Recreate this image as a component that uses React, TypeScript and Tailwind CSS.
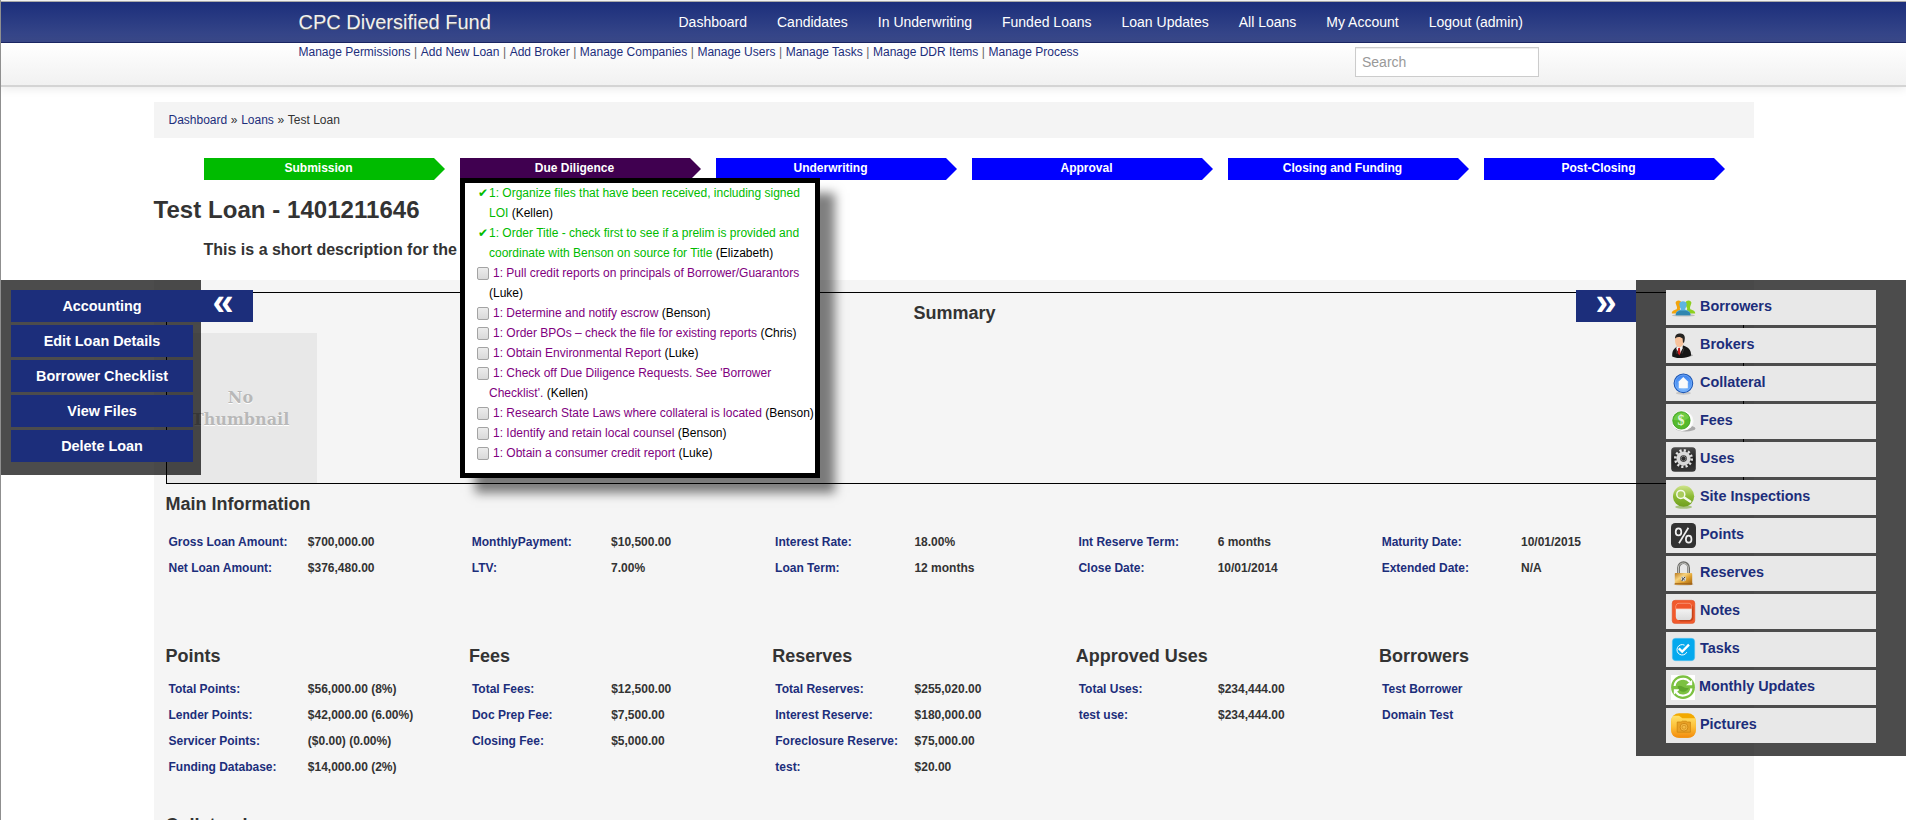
import React from "react";

const navItems = ["Dashboard", "Candidates", "In Underwriting", "Funded Loans", "Loan Updates", "All Loans", "My Account", "Logout (admin)"];
const adminLinks = ["Manage Permissions", "Add New Loan", "Add Broker", "Manage Companies", "Manage Users", "Manage Tasks", "Manage DDR Items", "Manage Process"];

const steps = [
  { label: "Submission", color: "bg-[#00bb00]" },
  { label: "Due Diligence", color: "bg-[#400050]" },
  { label: "Underwriting", color: "bg-[#0000ff]" },
  { label: "Approval", color: "bg-[#0000ff]" },
  { label: "Closing and Funding", color: "bg-[#0000ff]" },
  { label: "Post-Closing", color: "bg-[#0000ff]" },
];

type Task = { done?: boolean; lines: string[]; who: string };
const tasks: Task[] = [
  { done: true, lines: ["1: Organize files that have been received, including signed", "LOI "], who: "(Kellen)" },
  { done: true, lines: ["1: Order Title - check first to see if a prelim is provided and", "coordinate with Benson on source for Title "], who: "(Elizabeth)" },
  { lines: ["1: Pull credit reports on principals of Borrower/Guarantors", ""], who: "(Luke)" },
  { lines: ["1: Determine and notify escrow "], who: "(Benson)" },
  { lines: ["1: Order BPOs – check the file for existing reports "], who: "(Chris)" },
  { lines: ["1: Obtain Environmental Report "], who: "(Luke)" },
  { lines: ["1: Check off Due Diligence Requests. See 'Borrower", "Checklist'. "], who: "(Kellen)" },
  { lines: ["1: Research State Laws where collateral is located "], who: "(Benson)" },
  { lines: ["1: Identify and retain local counsel "], who: "(Benson)" },
  { lines: ["1: Obtain a consumer credit report "], who: "(Luke)" },
];

type Row = [string, string];
const mainInfo: Row[][] = [
  [["Gross Loan Amount:", "$700,000.00"], ["Net Loan Amount:", "$376,480.00"]],
  [["MonthlyPayment:", "$10,500.00"], ["LTV:", "7.00%"]],
  [["Interest Rate:", "18.00%"], ["Loan Term:", "12 months"]],
  [["Int Reserve Term:", "6 months"], ["Close Date:", "10/01/2014"]],
  [["Maturity Date:", "10/01/2015"], ["Extended Date:", "N/A"]],
];

const sections: { title: string; rows: Row[] }[] = [
  { title: "Points", rows: [["Total Points:", "$56,000.00 (8%)"], ["Lender Points:", "$42,000.00 (6.00%)"], ["Servicer Points:", "($0.00) (0.00%)"], ["Funding Database:", "$14,000.00 (2%)"]] },
  { title: "Fees", rows: [["Total Fees:", "$12,500.00"], ["Doc Prep Fee:", "$7,500.00"], ["Closing Fee:", "$5,000.00"]] },
  { title: "Reserves", rows: [["Total Reserves:", "$255,020.00"], ["Interest Reserve:", "$180,000.00"], ["Foreclosure Reserve:", "$75,000.00"], ["test:", "$20.00"]] },
  { title: "Approved Uses", rows: [["Total Uses:", "$234,444.00"], ["test use:", "$234,444.00"]] },
  { title: "Borrowers", rows: [["Test Borrower", ""], ["Domain Test", ""]] },
];

const actions = ["Accounting", "Edit Loan Details", "Borrower Checklist", "View Files", "Delete Loan"];

function Icon({ children }: { children: React.ReactNode }) {
  return (
    <svg width="25" height="25" viewBox="0 0 25 25" className="block shrink-0">
      {children}
    </svg>
  );
}

const BorrowersIcon = (
  <Icon>
    <ellipse cx="12.5" cy="20.4" rx="11.5" ry="1.2" fill="#bdbdbd" />
    <path d="M4.6 8C4.4 5 9.8 4.4 10.4 7.6L10 11 8.8 13.6 10 18.4H.8C.8 15.8 3 15.2 5.8 14.2L6 12.2Z" fill="#f2a40c" />
    <path d="M20.4 8C20.6 5 15.2 4.4 14.6 7.6L15 11 16.2 13.6 15 18.4H24.2C24.2 15.8 22 15.2 19.2 14.2L19 12.2Z" fill="#8dd01f" />
    <path d="M8.2 9.4C8.2 5.2 15.8 5.2 15.8 9.4L14.8 12.8 13.8 14.6C16.8 15.6 19.4 16 19.5 20.2H4.7C4.8 16 7.2 15.6 10.2 14.6L9.2 12.8Z" fill="#5db4e0" />
    <path d="M4.7 20.2C4.8 17.5 6 16.6 9 15.4H15C18.3 16.6 19.4 17.6 19.5 20.2Z" fill="#2f86b0" />
  </Icon>
);

const BrokersIcon = (
  <Icon>
    <ellipse cx="14" cy="22.3" rx="8" ry="1.6" fill="#a8a8a8" />
    <path d="M1.2 23.4C1 17 3.2 15.6 6.4 13.2L12.4 12.4C17.4 14.4 20.4 16.4 20 22.6 15 25.8 5 25.6 1.2 23.4Z" fill="#161616" />
    <path d="M5.6 13.6L11.8 11.8 11.6 15.4 8.8 21 5.2 16Z" fill="#f3f3f3" />
    <path d="M7.2 15L9 14.8 9.4 20.4 8.4 22.4 6.6 20Z" fill="#c81e1e" />
    <path d="M4.2 5.2C4.4 2.6 11.4 2 12.4 5.4 13.4 9 12.4 13.6 8.2 14.2 4.6 13.6 3.6 9 4.2 5.2Z" fill="#f7c39d" />
    <path d="M4 5.4C4.2 1.2 7 .4 9.6.6 13.6.8 14.8 4 13.2 9.2L12 10 11.6 5.6C9.6 3.4 6.6 3.4 4 5.4Z" fill="#262422" />
    <path d="M13 15.4L11 20.6M5 15.6L6 21" stroke="#4a4a4a" strokeWidth=".7" />
  </Icon>
);

const CollateralIcon = (
  <Icon>
    <defs>
      <radialGradient id="homeBlue" cx=".5" cy=".7" r=".7">
        <stop offset="0" stopColor="#8cc4ff" />
        <stop offset=".7" stopColor="#4a90f4" />
        <stop offset="1" stopColor="#3a78e0" />
      </radialGradient>
    </defs>
    <ellipse cx="12.4" cy="22.2" rx="7.5" ry="1.6" fill="#c6c6c6" />
    <circle cx="12.4" cy="12.3" r="9.3" fill="url(#homeBlue)" stroke="#1c56b4" strokeWidth="1.1" />
    <circle cx="12.4" cy="12.3" r="8.3" fill="none" stroke="#8ec0ff" strokeWidth=".5" />
    <path d="M12.3 5.9L17.6 11.2H16.8V17.2H7.8V11.2H7Z" fill="#fafafa" />
  </Icon>
);

const FeesIcon = (
  <Icon>
    <ellipse cx="14.5" cy="19.4" rx="10" ry="3" fill="#a9a9a9" />
    <circle cx="13.4" cy="12" r="9.2" fill="#f7f7f7" />
    <circle cx="11" cy="11.8" r="10.2" fill="#ffffff" />
    <circle cx="10.4" cy="11.4" r="8.7" fill="#55b92c" stroke="#349c16" strokeWidth=".8" />
    <path d="M2.6 11C3.4 3 15 1 18 8.4 14 12.6 8 11.4 2.6 11Z" fill="#74cf4b" opacity=".8" />
    <text x="10" y="16.4" textAnchor="middle" fontSize="14" fontWeight="bold" fontFamily="Liberation Serif, serif" fill="#e2f7d4">$</text>
  </Icon>
);

const UsesIcon = (
  <Icon>
    <defs>
      <linearGradient id="usesBg" x1="0" y1="0" x2="0" y2="1">
        <stop offset="0" stopColor="#4c4c4c" />
        <stop offset=".5" stopColor="#1f1f1f" />
        <stop offset="1" stopColor="#3a3a3a" />
      </linearGradient>
    </defs>
    <rect x=".2" y=".2" width="24.6" height="24.6" rx="3.6" fill="url(#usesBg)" />
    <circle cx="12.5" cy="11.6" r="8.2" fill="none" stroke="#e2e2e2" strokeWidth="2.6" strokeDasharray="2.147 2.147" />
    <circle cx="12.5" cy="11.6" r="5.2" fill="none" stroke="#d9d9d9" strokeWidth="3.8" />
    <circle cx="12.5" cy="11.6" r="2.4" fill="#2c2c2c" stroke="#8b8b8b" strokeWidth=".8" />
  </Icon>
);

const InspectionIcon = (
  <Icon>
    <defs>
      <linearGradient id="inspectBg" x1="0" y1="0" x2="0" y2="1">
        <stop offset="0" stopColor="#cfe48b" />
        <stop offset=".5" stopColor="#8dbb35" />
        <stop offset="1" stopColor="#6f9e1d" />
      </linearGradient>
    </defs>
    <ellipse cx="12.6" cy="22" rx="8.4" ry="1.8" fill="#a9c381" />
    <circle cx="12.6" cy="11.2" r="10.6" fill="url(#inspectBg)" />
    <path d="M12.8 12.2L19.2 16.6" stroke="#f4faea" strokeWidth="2.4" strokeLinecap="round" />
    <circle cx="9.8" cy="9.4" r="4" fill="#a9cc5c" stroke="#f4faea" strokeWidth="1.5" />
  </Icon>
);

const PointsIcon = (
  <Icon>
    <rect width="25" height="25" rx="4.2" fill="#323232" />
    <ellipse cx="7.5" cy="8.9" rx="2.8" ry="3.5" fill="none" stroke="#f0f0f0" strokeWidth="1.7" />
    <ellipse cx="17.7" cy="16.2" rx="2.8" ry="3.5" fill="none" stroke="#f0f0f0" strokeWidth="1.7" />
    <path d="M17.4 4.8L8 20.3" stroke="#f0f0f0" strokeWidth="1.7" />
  </Icon>
);

const ReservesIcon = (
  <Icon>
    <defs>
      <linearGradient id="lockBody" x1="0" y1="0" x2="1" y2="1">
        <stop offset="0" stopColor="#b9781c" />
        <stop offset=".35" stopColor="#f6d27e" />
        <stop offset=".6" stopColor="#dfa02e" />
        <stop offset="1" stopColor="#9f5f10" />
      </linearGradient>
    </defs>
    <ellipse cx="12.6" cy="23.2" rx="10" ry="1.4" fill="#c9c0b4" />
    <path d="M7.5 13V7C7.5-.2 17.6-.2 17.6 7V13" fill="none" stroke="#6a6a66" strokeWidth="2.8" />
    <path d="M7.4 13V7C7.4.4 17.3.4 17.3 7V13" fill="none" stroke="#c9c9c4" strokeWidth="1" />
    <rect x="3.8" y="12" width="17.4" height="11.8" rx=".8" fill="url(#lockBody)" />
    <path d="M3.8 22.8h17.4" stroke="#a2641a" strokeWidth="1.2" />
    <circle cx="12.5" cy="17.8" r="2.6" fill="#d9d6cc" />
    <path d="M10.8 16.6l1.6 1.2 1.6-1.8M12 18l-1.2 2M12.6 18.2l1 .8" stroke="#3b3b3b" strokeWidth="1" fill="none" />
  </Icon>
);

const NotesIcon = (
  <Icon>
    <defs>
      <linearGradient id="notePad" x1="0" y1="0" x2="0" y2="1">
        <stop offset="0" stopColor="#ffffff" />
        <stop offset="1" stopColor="#dcdcdc" />
      </linearGradient>
    </defs>
    <rect x="1.2" y="1.3" width="22.6" height="23.3" rx="3" fill="#f15a2c" stroke="#d9491f" strokeWidth=".5" />
    <path d="M7 20.6L9.4 22.4H18.6C21 22.4 22.4 21 22.4 18.6V8L20 5Z" fill="#b23a14" opacity=".7" />
    <rect x="4.8" y="4.2" width="16" height="16.8" rx="3.6" fill="url(#notePad)" />
    <path d="M4.8 9.8V7.8C4.8 5.4 6.2 4.2 8.4 4.2H17.2C19.4 4.2 20.8 5.4 20.8 7.8V9.8Z" fill="#f0562b" stroke="#ff9a78" strokeWidth=".5" />
  </Icon>
);

const TasksIcon = (
  <Icon>
    <rect x="1.3" y="1.3" width="22.4" height="22.4" rx="3.4" fill="#05a9ee" stroke="#5cc4f0" strokeWidth=".5" />
    <path d="M15.8 15.2A5.2 5.2 0 1 1 13.6 8.2" fill="none" stroke="#fff" strokeWidth="1" />
    <path d="M7.8 11.4L11.2 14.6 18 7.6" fill="none" stroke="#fff" strokeWidth="2.3" />
  </Icon>
);

const UpdatesIcon = (
  <svg width="24" height="25" viewBox="0 0 24 25" className="block shrink-0">
    <rect width="24" height="25" fill="#fff" />
    <circle cx="12" cy="12.2" r="11.9" fill="#7cc141" />
    <path d="M3.6 11C4.4 3.4 14.6 1.4 19 7.2" fill="none" stroke="#fff" strokeWidth="2.1" />
    <path d="M21.2 4.8V10.2H15Z" fill="#fff" />
    <path d="M20.4 13.4C19.6 21 9.4 23 5 17.2" fill="none" stroke="#fff" strokeWidth="2.1" />
    <path d="M2.8 19.8V14.2H9Z" fill="#fff" />
    <path d="M6.4 11.4C10 9 14 15 18 12.4 16.4 17.6 8.4 18.8 6.4 11.4Z" fill="#5fa62d" />
  </svg>
);

const PicturesIcon = (
  <Icon>
    <defs>
      <linearGradient id="picBg" x1="0" y1="0" x2="0" y2="1">
        <stop offset="0" stopColor="#ffe169" />
        <stop offset=".5" stopColor="#fdbf37" />
        <stop offset="1" stopColor="#f28a0c" />
      </linearGradient>
    </defs>
    <rect x=".2" y=".2" width="24.6" height="24.6" rx="8" fill="#f2a900" />
    <path d="M.2 7.6C.2 4.4 1.6 2.8 3.6 2.8H8L11.4 5.2H24.2C24.8 6.2 24.8 7.4 24.8 8.2V16.8C24.8 22 22 24.8 16.8 24.8H8.2C3 24.8.2 22 .2 16.8Z" fill="url(#picBg)" />
    <path d="M6.2 9h4l1-.8h4l1 .8h3.2v10.2H6.2z" fill="#e9a126" stroke="#c9820f" strokeWidth=".7" />
    <circle cx="13" cy="14.2" r="3.9" fill="#f5bb46" stroke="#c67d0e" strokeWidth=".8" />
    <circle cx="13" cy="14.2" r="2" fill="none" stroke="#d08c1a" strokeWidth=".8" />
  </Icon>
);

const shortcuts = [
  { label: "Borrowers", icon: BorrowersIcon },
  { label: "Brokers", icon: BrokersIcon },
  { label: "Collateral", icon: CollateralIcon },
  { label: "Fees", icon: FeesIcon },
  { label: "Uses", icon: UsesIcon },
  { label: "Site Inspections", icon: InspectionIcon },
  { label: "Points", icon: PointsIcon },
  { label: "Reserves", icon: ReservesIcon },
  { label: "Notes", icon: NotesIcon },
  { label: "Tasks", icon: TasksIcon },
  { label: "Monthly Updates", icon: UpdatesIcon },
  { label: "Pictures", icon: PicturesIcon },
];

function DataRow({ row }: { row: Row }) {
  return (
    <div className="flex h-[26px] items-center text-xs font-bold whitespace-nowrap">
      <span className="w-[139.3px] text-[#1c2e7b]">{row[0]}</span>
      <span>{row[1]}</span>
    </div>
  );
}

function TaskPopup() {
  return (
    <div className="absolute top-5 left-0 z-20 h-[300px] w-[360px] border-[5px] border-black bg-white text-xs leading-5 font-normal whitespace-nowrap shadow-[15px_15px_10px_rgba(0,0,0,0.5)]">
      {tasks.map((t) => (
        <div key={t.lines[0]} className={t.done ? "pl-6 text-[#00bb00]" : "pl-6 text-[#800080]"}>
          {t.lines.map((line, i) => (
            <div key={i} className="flex h-5 whitespace-pre">
              {i === 0 && t.done && <span className="-ml-[11px] w-[11px] font-['DejaVu_Sans']">✔</span>}
              {i === 0 && !t.done && (
                <span className="mt-1 mr-1 -ml-3 h-[13px] w-3 rounded-[2px] border border-[#a3a3a3] bg-linear-to-b from-[#ececec] to-[#d9d9d9]" />
              )}
              <span>{line}</span>
              {i === t.lines.length - 1 && <span className="text-black">{t.who}</span>}
            </div>
          ))}
        </div>
      ))}
    </div>
  );
}

export default function App() {
  return (
    <div className="relative h-[820px] w-[1906px] overflow-hidden bg-white font-['Liberation_Sans',Arial,sans-serif] text-xs text-[#333]">
      <header className="relative z-10">
        <div className="h-px bg-[#f2f2f2]" />
        <div className="h-px bg-[#a9a9a9]" />
        <div className="flex h-[41px] items-center border-b border-[#1c2766] bg-linear-to-b from-[#1c2e7b] to-[#3b4a8b] pl-[298.5px]">
          <span className="w-[365px] text-[20px] leading-5 text-[#f0f0f0] [text-shadow:0_1px_0_#666]">CPC Diversified Fund</span>
          <nav className="flex text-sm leading-5 text-white">
            {navItems.map((n) => (
              <a key={n} className="px-[15px]">{n}</a>
            ))}
          </nav>
        </div>
        <div className="flex h-11 items-start border-b-2 border-[#d4d4d4] bg-linear-to-b from-white to-[#f1f1f1] pl-[298.5px] shadow-[0_1px_10px_rgba(0,0,0,0.1)]">
          <div className="w-[1056.5px] leading-[18px] text-[#666]">
            {adminLinks.map((l, i) => (
              <React.Fragment key={l}>
                {i > 0 && <span className="px-[0.2px]"> | </span>}
                <a className="text-[#1c2e7b]">{l}</a>
              </React.Fragment>
            ))}
          </div>
          <div className="mt-1 flex h-[30px] w-[184px] items-center border border-[#ccc] bg-white px-1.5 text-sm text-[#999] shadow-[inset_0_1px_1px_rgba(0,0,0,0.075)]">
            Search
          </div>
        </div>
      </header>

      <main className="ml-[153.5px] w-[1600px]">
        <div className="mt-[15px] flex h-9 items-center bg-[#f4f4f4] pl-[15px]">
          <span>
            <a className="text-[#1c2e7b]">Dashboard</a><span className="px-[0.3px]"> » </span>
            <a className="text-[#1c2e7b]">Loans</a><span className="px-[0.3px]"> » </span>Test Loan
          </span>
        </div>

        <div className="mt-5 ml-[50.5px] flex gap-[15px]">
          {steps.map((s, i) => (
            <div key={s.label} className="relative h-[22px] w-[241px] shrink-0">
              <div className={`${s.color} h-[22px] w-[241px] pr-[12px] text-center leading-5 font-bold text-white [clip-path:polygon(0_0,230px_0,241px_50%,230px_100%,0_100%)]`}>
                {s.label}
              </div>
              {i === 1 && <TaskPopup />}
            </div>
          ))}
        </div>

        <h1 className="mt-[10px] text-2xl leading-10 font-bold tracking-[0.05px]">Test Loan - 1401211646</h1>
        <p className="mt-[10px] ml-[50px] h-10 text-base leading-5 font-bold">This is a short description for the loan</p>

        <section className="h-[560px] bg-[#f5f5f5] pt-3 pl-3">
          <div className="relative h-48 w-[1578px] border border-black pt-[10px] text-center">
            <h2 className="text-lg leading-5 font-bold">Summary</h2>
            <div className="mt-[10px] h-[150px] w-[150px] bg-[#e8e8e8] pt-[54px] pr-0.5 font-['DejaVu_Serif',serif] text-[16px] leading-[22px] font-bold text-[#b8b8b8] [text-shadow:0_1px_0_#fff]">
              No<br />Thumbnail
            </div>
          </div>

          <h2 className="mt-[10px] text-lg leading-5 font-bold">Main Information</h2>
          <div className="mt-[15px] flex pl-[3px]">
            {mainInfo.map((col, i) => (
              <div key={i} className="w-[303.3px] shrink-0">
                {col.map((r) => <DataRow key={r[0]} row={r} />)}
              </div>
            ))}
          </div>

          <div className="mt-[65px] flex h-[169px]">
            {sections.map((s) => (
              <div key={s.title} className="w-[303.4px] shrink-0">
                <h2 className="text-lg leading-5 font-bold">{s.title}</h2>
                <div className="mt-[10px] pl-[3px]">
                  {s.rows.map((r) => <DataRow key={r[0]} row={r} />)}
                </div>
              </div>
            ))}
          </div>
          <h2 className="text-lg leading-5 font-bold">Collateral</h2>
        </section>
      </main>

      <aside className="absolute top-[280px] left-0 flex">
        <div className="h-[195px] w-[201px] bg-black/70 pt-[10px] pl-[11px] text-[14.4px] font-bold text-white">
          <div className="flex w-[182px] flex-col gap-[3px] text-center leading-8">
            {actions.map((a) => (
              <a key={a} className="block h-8 bg-[#1c2e7b]">{a}</a>
            ))}
          </div>
        </div>
        <div className="mt-[10px] -ml-2 h-8 w-[60px] bg-[#1c2e7b] text-center text-[38px] leading-6 font-bold text-white">«</div>
      </aside>

      <aside className="absolute top-[280px] right-0 flex">
        <div className="mt-[10px] h-8 w-[60px] bg-[#1c2e7b] text-center text-[38px] leading-6 font-bold text-white">»</div>
        <div className="flex h-[476px] w-[270px] flex-col gap-[3px] bg-black/70 px-[30px] pt-[10px] text-[14.4px] font-bold text-[#1c2e7b]">
          {shortcuts.map((s) => (
            <a key={s.label} className="flex h-[35px] shrink-0 gap-1 bg-[#e8e8e8] pt-[5px] pl-[5px]">
              {s.icon}
              <span className="leading-[22px]">{s.label}</span>
            </a>
          ))}
        </div>
      </aside>

      <div className="absolute top-0 left-0 z-30 h-full w-px bg-[#8f8f8f]" />
    </div>
  );
}
